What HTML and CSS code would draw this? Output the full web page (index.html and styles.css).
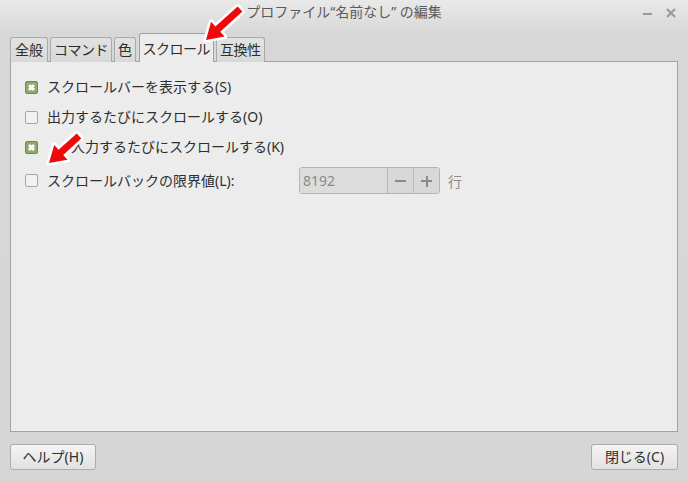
FILE: index.html
```html
<!DOCTYPE html>
<html lang="ja">
<head>
<meta charset="utf-8">
<link rel="stylesheet" href="styles.css">
</head>
<body>
<div class="window">
  <div class="titlebar">
    <div class="title">プロファイル“名前なし” の編集</div>
    <div class="controls">
      <span class="ctl min"></span>
      <svg class="ctl close" width="10" height="10" viewBox="0 0 10 10"><path d="M1 1L9 9M9 1L1 9" stroke="#9a9a9a" stroke-width="2.2"/></svg>
    </div>
  </div>
  <div class="content">
    <div class="tabs">
      <div class="tab">全般</div>
      <div class="tab">コマンド</div>
      <div class="tab">色</div>
      <div class="tab active">スクロール</div>
      <div class="tab">互換性</div>
    </div>
    <div class="panel">
      <div class="row"><span class="cb checked"></span><span class="label">スクロールバーを表示する(S)</span></div>
      <div class="row"><span class="cb"></span><span class="label">出力するたびにスクロールする(O)</span></div>
      <div class="row"><span class="cb checked"></span><span class="label shifted">人力するたびにスクロールする(K)</span></div>
      <div class="row spinrow"><span class="cb"></span><span class="label fixed">スクロールバックの限界値(L):</span>
        <div class="spin">
          <div class="entry">8192</div>
          <div class="sbtn minus"></div>
          <div class="sbtn plus"></div>
        </div>
        <span class="unit">行</span>
      </div>
    </div>
    <div class="buttons">
      <div class="btn help">ヘルプ(H)</div>
      <div class="btn closebtn">閉じる(C)</div>
    </div>
  </div>
  <svg class="arrows" width="688" height="482" viewBox="0 0 688 482">
    <polygon points="206,40 224.5,36.6 220.2,31.8 242.4,11.6 237.6,6.4 215.4,26.6 211.1,21.8"/>
    <polygon points="49,163 67.6,159.7 63.2,154.9 81.3,138.6 76.7,133.4 58.6,149.7 54.2,144.9"/>
  </svg>
</div>
</body>
</html>
```

FILE: styles.css
```css
html, body {
  margin: 0;
  padding: 0;
}
body {
  width: 688px;
  height: 482px;
  overflow: hidden;
  background: #d6d6d6;
  font-family: "Noto Sans", "Noto Sans CJK JP", sans-serif;
  font-size: 14px;
  color: #333;
}
.window {
  position: relative;
  width: 688px;
  height: 482px;
  display: flex;
  flex-direction: column;
  background: linear-gradient(to bottom, #e9e9e9 0px, #d7d7d7 34px, #d6d6d6 100%);
}
.titlebar {
  height: 34px;
  flex: 0 0 34px;
  display: flex;
  justify-content: center;
  position: relative;
}
.title {
  padding-top: 2px;
  line-height: 20px;
  font-size: 14px;
  color: #5a5a5a;
}
.controls {
  position: absolute;
  right: 12px;
  top: 8px;
  display: flex;
  align-items: center;
  gap: 14px;
}
.ctl.min {
  display: block;
  width: 9px;
  height: 2px;
  background: #9a9a9a;
  margin-top: 1px;
}
.content {
  flex: 1;
  display: flex;
  flex-direction: column;
  padding: 0 10px 12px 10px;
}
.tabs {
  display: flex;
  align-items: flex-end;
  gap: 2px;
  height: 28px;
  position: relative;
  z-index: 1;
  margin-bottom: -1px;
}
.tab {
  height: 24px;
  line-height: 24px;
  padding: 0 3px;
  border: 1px solid #a9a9a9;
  border-bottom: none;
  border-radius: 3px 3px 0 0;
  background: linear-gradient(to bottom, #e2e2e2, #d9d9d9);
  color: #2e2e2e;
  font-size: 14px;
  letter-spacing: -0.5px;
}
.tab:first-child {
  padding: 0 4px;
  letter-spacing: 0;
}
.tab.active {
  height: 28px;
  line-height: 30px;
  background: #ececec;
  border-color: #a0a0a0;
  margin-left: 1px;
}
.panel {
  flex: 1;
  background: #ececec;
  border: 1px solid #a2a2a2;
  padding: 15px 14px 0 14px;
  display: flex;
  flex-direction: column;
  gap: 10px;
}
.row {
  display: flex;
  align-items: center;
  min-height: 20px;
}
.cb {
  width: 11px;
  height: 11px;
  border: 1px solid #a6a6a6;
  border-radius: 2px;
  background: #f2f2f2;
  margin-right: 9px;
  flex: 0 0 auto;
  position: relative;
}
.cb.checked {
  background: #8dab68;
  border-color: #6f8c4f;
}
.cb.checked::before,
.cb.checked::after {
  content: "";
  position: absolute;
  left: 2px;
  top: 4px;
  width: 7px;
  height: 3px;
  background: #ffffff;
  transform: rotate(45deg);
}
.cb.checked::after {
  transform: rotate(-45deg);
}
.label {
  color: #2e2e2e;
  line-height: 20px;
}
.label.shifted {
  margin-left: 24px;
}
.label.fixed {
  width: 252px;
}
.spinrow {
  min-height: 27px;
}
.spin {
  display: flex;
  height: 27px;
  border: 1px solid #b4b4b4;
  border-radius: 3px;
  box-sizing: border-box;
  width: 141px;
  overflow: hidden;
}
.entry {
  width: 88px;
  background: #dcdcdc;
  color: #8a8a8a;
  line-height: 25px;
  padding-left: 3px;
  box-sizing: border-box;
  border-right: 1px solid #b9b9b9;
}
.sbtn {
  width: 25px;
  background: #d8d8d8;
  position: relative;
}
.sbtn.minus {
  border-right: 1px solid #bdbdbd;
}
.sbtn::before {
  content: "";
  position: absolute;
  left: 7px;
  top: 12px;
  width: 11px;
  height: 2px;
  background: #8a8a8a;
}
.sbtn.plus::after {
  content: "";
  position: absolute;
  left: 11.5px;
  top: 7.5px;
  width: 2px;
  height: 11px;
  background: #8a8a8a;
}
.unit {
  margin-left: 8px;
  color: #8a8a8a;
}
.buttons {
  display: flex;
  justify-content: space-between;
  padding-top: 12px;
}
.btn {
  height: 24px;
  line-height: 24px;
  border: 1px solid #acacac;
  border-radius: 3px;
  background: linear-gradient(to bottom, #f4f4f4, #e1e1e1);
  text-align: center;
  color: #2e2e2e;
}
.btn.help {
  width: 84px;
}
.btn.closebtn {
  width: 85px;
}
.arrows {
  position: absolute;
  left: 0;
  top: 0;
  pointer-events: none;
  z-index: 5;
}
.arrows polygon {
  fill: #ee0a0a;
  stroke: #ffffff;
  stroke-width: 5;
  stroke-linejoin: round;
  paint-order: stroke;
}
```
